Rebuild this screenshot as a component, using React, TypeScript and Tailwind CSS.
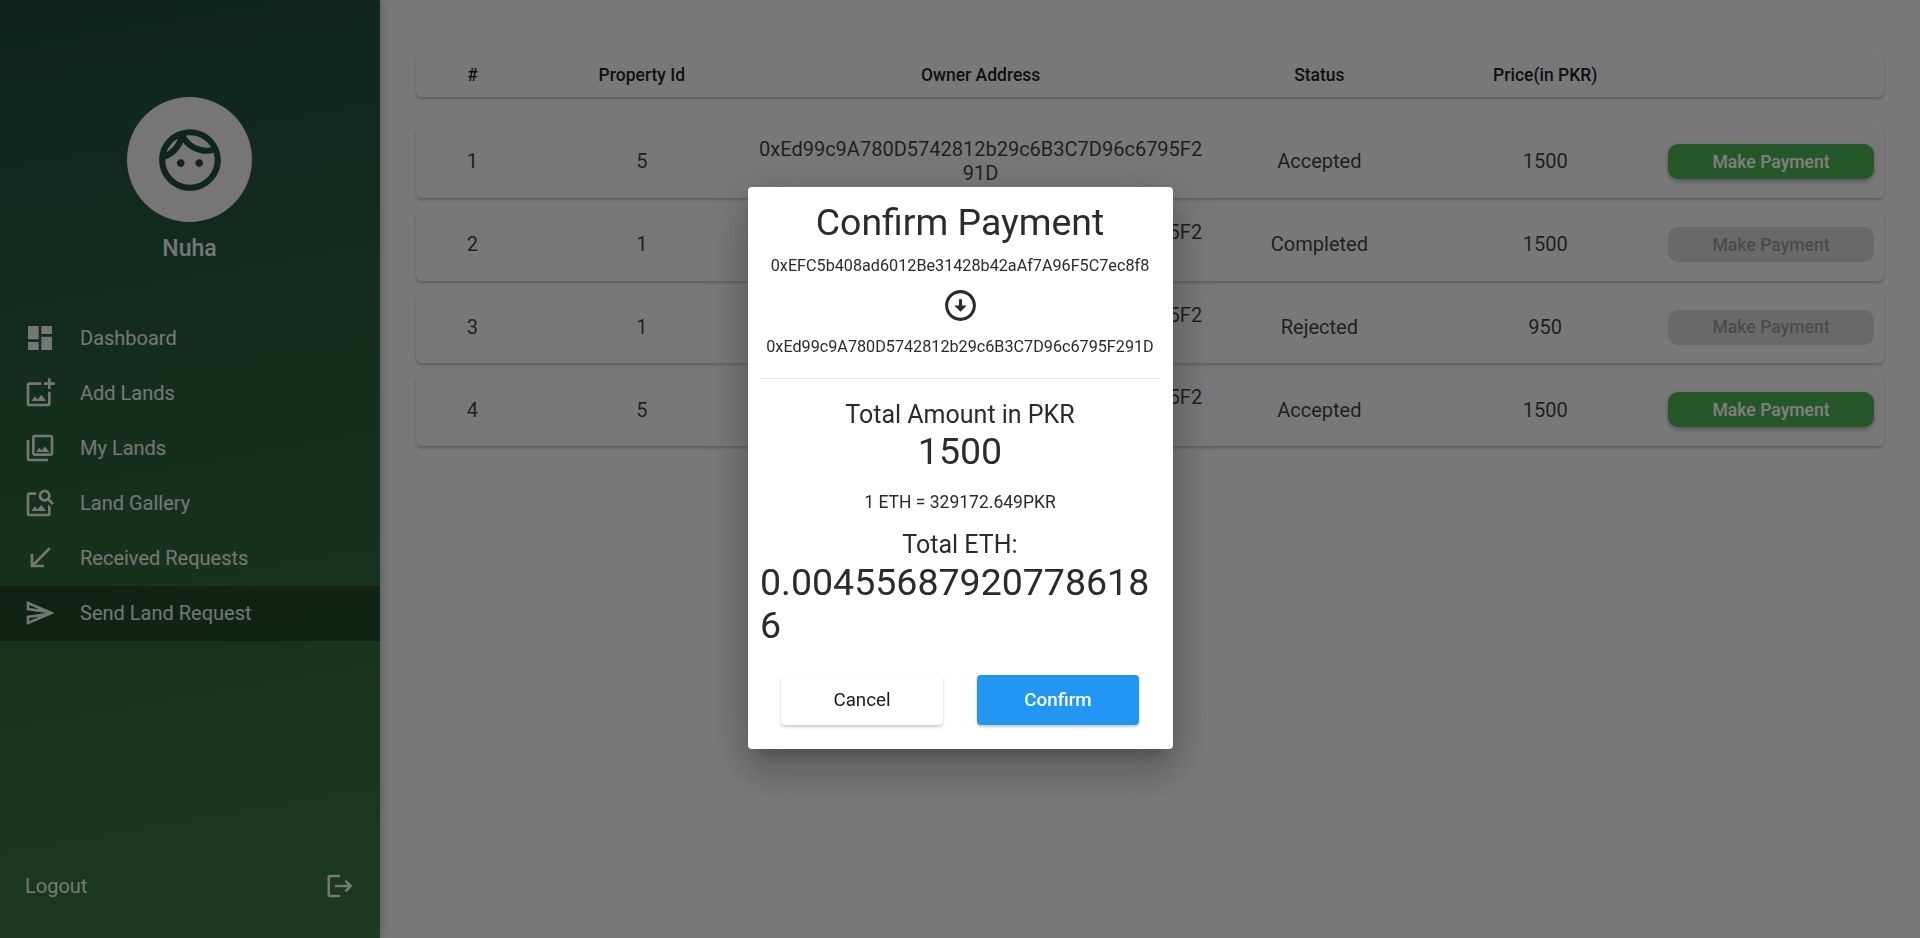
const rows = [
  { id: 1, property: 5, status: "Accepted", price: 1500, active: true },
  { id: 2, property: 1, status: "Completed", price: 1500, active: false },
  { id: 3, property: 1, status: "Rejected", price: 950, active: false },
  { id: 4, property: 5, status: "Accepted", price: 1500, active: true },
];

const navItems = [
  { label: "Dashboard", d: "M3 13h8V3H3v10zm0 8h8v-6H3v6zm10 0h8V11h-8v10zm0-18v6h8V3h-8z" },
  {
    label: "Add Lands",
    d: "M18 20H4V6h9V4H4c-1.1 0-2 .9-2 2v14c0 1.1.9 2 2 2h14c1.1 0 2-.9 2-2v-9h-2v9zm-7.79-3.17l-1.96-2.36L5.5 18h11l-3.54-4.71zM20 4V1h-2v3h-3c.01.01 0 2 0 2h3v2.99c.01.01 2 0 2 0V6h3V4h-3z",
  },
  {
    label: "My Lands",
    d: "M20 4v12H8V4h12m0-2H8c-1.1 0-2 .9-2 2v12c0 1.1.9 2 2 2h12c1.1 0 2-.9 2-2V4c0-1.1-.9-2-2-2zm-8.5 9.67l1.69 2.26 2.48-3.1L19 15H9zM2 6v14c0 1.1.9 2 2 2h14v-2H4V6H2z",
  },
  {
    label: "Land Gallery",
    d: "M18 13v7H4V6h5.02c.05-.71.22-1.38.48-2H4c-1.1 0-2 .9-2 2v14c0 1.1.9 2 2 2h14c1.1 0 2-.9 2-2v-5l-2-2zm-1.5 5h-11l2.75-3.53 1.96 2.36 2.75-3.54zm2.8-9.11c.44-.7.7-1.51.7-2.39C20 4.01 17.99 2 15.5 2S11 4.01 11 6.5s2.01 4.5 4.49 4.5c.88 0 1.7-.26 2.39-.7L21 13.42 22.42 12 19.3 8.89zM15.5 9C14.12 9 13 7.88 13 6.5S14.12 4 15.5 4 18 5.12 18 6.5 16.88 9 15.5 9z",
  },
  { label: "Received Requests", d: "M20 5.41 18.59 4 7 15.59V9H5v10h10v-2H8.41z" },
  {
    label: "Send Land Request",
    d: "M4.01 6.03l7.51 3.22-7.52-1 .01-2.22m7.5 8.72L4 17.97v-2.22l7.51-1M2.01 3L2 10l15 2-15 2 .01 7L23 12 2.01 3z",
    active: true,
  },
];

function Icon({ d, className }: { d: string; className: string }) {
  return (
    <svg viewBox="0 0 24 24" fill="currentColor" className={className}>
      <path d={d} />
    </svg>
  );
}

const cardShadow = "shadow-[0_2px_3px_rgba(0,0,0,0.2),0_0_1px_rgba(0,0,0,0.05)]";

function Sidebar() {
  return (
    <aside className="flex h-screen w-[380px] shrink-0 flex-col bg-[linear-gradient(170deg,#1e4a3c,#37753e)] text-white/90 shadow-[0_0_10px_rgba(0,0,0,0.3)]">
      <div className="flex flex-col items-center pr-[1px] pt-[97px]">
        <div className="flex h-[125px] w-[125px] items-center justify-center rounded-full bg-[#ececec] text-[#1e4a3c]">
          <Icon
            className="h-[74px] w-[74px]"
            d="M10.25 13c0 .69-.56 1.25-1.25 1.25S7.75 13.69 7.75 13s.56-1.25 1.25-1.25 1.25.56 1.25 1.25zM15 11.75c-.69 0-1.25.56-1.25 1.25s.56 1.25 1.25 1.25 1.25-.56 1.25-1.25-.56-1.25-1.25-1.25zm7 .25c0 5.52-4.48 10-10 10S2 17.52 2 12 6.48 2 12 2s10 4.48 10 10zM10.66 4.12C12.06 6.44 14.6 8 17.5 8c.46 0 .91-.05 1.34-.12C17.44 5.56 14.9 4 12 4c-.46 0-.91.05-1.34.12zM4.42 9.47c1.71-.97 3.03-2.55 3.66-4.44C6.37 6 5.05 7.58 4.42 9.47zM20 12c0-.78-.12-1.53-.33-2.24-.7.15-1.42.24-2.17.24-3.13 0-5.92-1.44-7.76-3.69C8.69 8.87 6.6 10.88 4 11.86c.01.04 0 .09 0 .14 0 4.41 3.59 8 8 8s8-3.59 8-8z"
          />
        </div>
        <div className="mt-[13px] text-[23px] font-medium leading-[28px]">Nuha</div>
      </div>

      <nav className="mt-[47.5px]">
        {navItems.map((item) => (
          <div
            key={item.label}
            className={`flex h-[55px] items-center pl-[24px] ${item.active ? "bg-black/30" : ""}`}
          >
            <Icon d={item.d} className="h-[32px] w-[32px]" />
            <span className="ml-[24px] text-[20px]">{item.label}</span>
          </div>
        ))}
      </nav>

      <div className="mt-auto flex items-center justify-between pb-[36px] pl-[25px] pr-[25px]">
        <span className="text-[20px] leading-[32px]">Logout</span>
        <Icon
          className="h-[30px] w-[30px]"
          d="M17 7l-1.41 1.41L18.17 11H8v2h10.17l-2.58 2.58L17 17l5-5zM4 5h8V3H4c-1.1 0-2 .9-2 2v14c0 1.1.9 2 2 2h8v-2H4V5z"
        />
      </div>
    </aside>
  );
}

function RequestsTable() {
  return (
    <main className="flex-1 px-[36px] pt-[52px]">
      <div
        className={`grid h-[45px] grid-cols-[1fr_2fr_4fr_2fr_2fr_2fr] items-center rounded-[6px] bg-[#f0f0f0] pt-[1px] text-center text-[17.5px] font-medium text-black/90 ${cardShadow}`}
      >
        <div>#</div>
        <div>Property Id</div>
        <div>Owner Address</div>
        <div>Status</div>
        <div>Price(in PKR)</div>
        <div />
      </div>

      <div className="mt-[28px] flex flex-col gap-[10px]">
        {rows.map((row) => (
          <div
            key={row.id}
            className={`grid grid-cols-[1fr_2fr_4fr_2fr_2fr_2fr] items-center rounded-[6px] bg-[#f0f0f0] py-[12px] text-center text-[20px] leading-[24.4px] text-black/75 ${cardShadow}`}
          >
            <div>{row.id}</div>
            <div>{row.property}</div>
            <div className="break-all px-[4px]">0xEd99c9A780D5742812b29c6B3C7D96c6795F291D</div>
            <div>{row.status}</div>
            <div>{row.price}</div>
            <div className="px-[10px]">
              <button
                className={`h-[35px] w-full rounded-[10px] pt-[1px] text-[17.6px] font-medium ${
                  row.active
                    ? "bg-[#4caf50] text-white shadow-[0_2px_4px_rgba(0,0,0,0.3)]"
                    : "bg-black/12 text-black/30"
                }`}
              >
                Make Payment
              </button>
            </div>
          </div>
        ))}
      </div>
    </main>
  );
}

function ConfirmDialog() {
  return (
    <div className="fixed inset-0 flex items-center justify-center bg-black/50">
      <div className="mb-[2px] h-[562px] w-[425px] rounded-[4px] bg-white px-[12.5px] pt-[11.5px] text-center text-[#2b2b2b] shadow-[0_11px_15px_-7px_rgba(0,0,0,0.2),0_24px_38px_3px_rgba(0,0,0,0.14),0_9px_46px_8px_rgba(0,0,0,0.12)]">
        <h2 className="text-[37.4px] leading-[46px]">Confirm Payment</h2>
        <p className="mt-[11.5px] text-[16.2px] leading-[20px]">0xEFC5b408ad6012Be31428b42aAf7A96F5C7ec8f8</p>
        <div className="mt-[10.5px] flex justify-center">
          <Icon
            className="h-[37px] w-[37px]"
            d="M12 4c4.41 0 8 3.59 8 8s-3.59 8-8 8s-8-3.59-8-8S7.59 4 12 4 M12 2C6.48 2 2 6.48 2 12c0 5.52 4.48 10 10 10c5.52 0 10-4.48 10-10C22 6.48 17.52 2 12 2L12 2z M13 12l0-4h-2l0 4H8l4 4l4-4H13z"
          />
        </div>
        <p className="mt-[13px] text-[16.2px] leading-[20px]">0xEd99c9A780D5742812b29c6B3C7D96c6795F291D</p>
        <hr className="mt-[21px] border-t border-[#e8e8e8]" />
        <p className="mt-[21.5px] text-[25px] leading-[30px]">Total Amount in PKR</p>
        <p className="text-[37.5px] leading-[43px]">1500</p>
        <p className="mt-[19px] text-[17.5px] leading-[20px]">1 ETH = 329172.649PKR</p>
        <p className="mt-[18px] text-[25px] leading-[30px]">Total ETH:</p>
        <p className="mt-[1px] break-all text-left text-[37.5px] leading-[43px]">0.004556879207786186</p>
        <div className="mt-[27.5px] flex justify-center gap-[34px]">
          <button className={`h-[50px] w-[162px] rounded-[4px] bg-white pt-[1px] text-[18.8px] text-black/90 ${cardShadow}`}>
            Cancel
          </button>
          <button className={`h-[50px] w-[162px] rounded-[4px] bg-[#2196f3] pt-[1px] text-[18.8px] font-medium text-white ${cardShadow}`}>
            Confirm
          </button>
        </div>
      </div>
    </div>
  );
}

export default function App() {
  return (
    <div className="flex h-screen overflow-hidden bg-[#f0f0f0] font-[Roboto,sans-serif]">
      <Sidebar />
      <RequestsTable />
      <ConfirmDialog />
    </div>
  );
}
